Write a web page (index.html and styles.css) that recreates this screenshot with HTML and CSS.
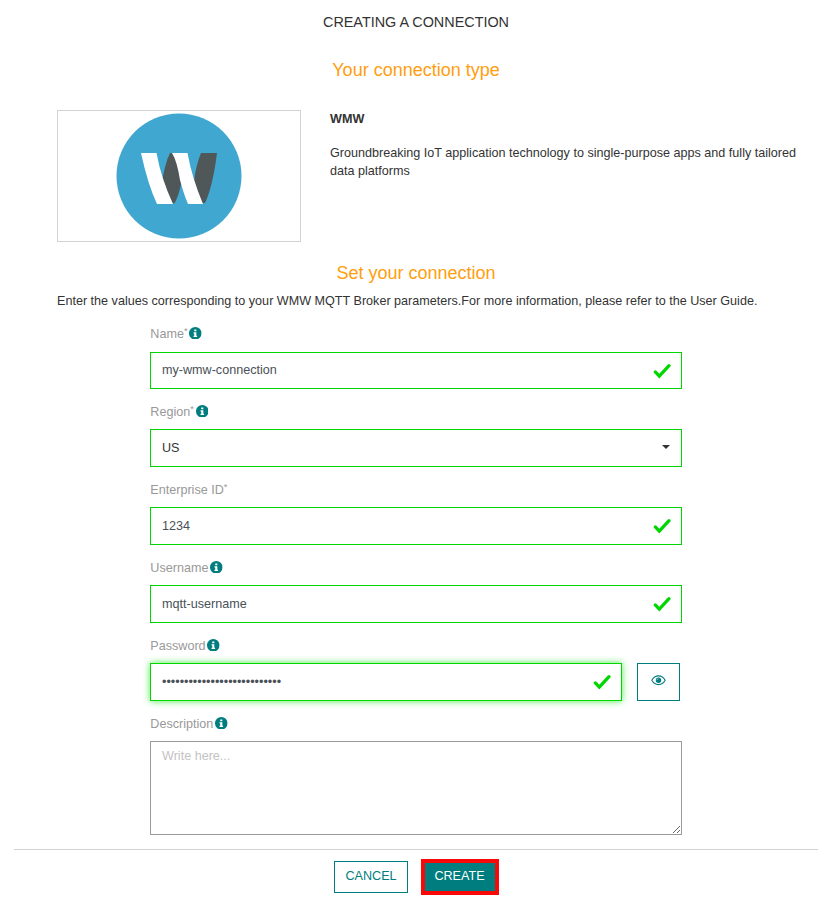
FILE: index.html
```html
<!DOCTYPE html>
<html lang="en">
<head>
<meta charset="utf-8">
<title>Creating a connection</title>
<link rel="stylesheet" href="styles.css">
</head>
<body>
<svg class="defs" width="0" height="0" aria-hidden="true">
  <symbol id="info" viewBox="0 0 12 12"><circle cx="6" cy="6" r="6"/><path fill="#fff" d="M5 2.300H7V4H5ZM4.300 4.900H7V8.300H7.700V9.500H4.300V8.300H5V6.100H4.300Z"/></symbol>
  <symbol id="check" viewBox="0 0 18 16"><path d="M2.300 8.900 6.300 13.100 16 2.700" fill="none" stroke="currentColor" stroke-width="3.200" stroke-linecap="round" stroke-linejoin="miter"/></symbol>
</svg>
<main class="dialog">
  <h1 class="title">CREATING A CONNECTION</h1>
  <h2 class="heading">Your connection type</h2>
  <section class="type">
    <div class="logo">
      <svg width="126" height="126" viewBox="0 0 126 126">
        <circle cx="63" cy="63" r="62.500" fill="#40a8d0"/>
        <path fill="#505758" d="M54 40H58L66 67Q63 82 59 89.500 57.500 91.500 55 89L46 69Q49 50 54 40ZM85 40H101Q97 72 89.500 89 87.500 92 85 88L78 68Q80 52 85 40Z"/>
        <path fill="#fff" d="M25 40H40.500Q45 65 57 91H41Q32 72 25 40ZM56 40H71.500Q76 65 87 91H72Q68 82 64 67 61 48 56 40Z"/>
      </svg>
    </div>
    <div class="about">
      <strong>WMW</strong>
      <p>Groundbreaking IoT application technology to single-purpose apps and fully tailored data platforms</p>
    </div>
  </section>
  <h2 class="heading set">Set your connection</h2>
  <p class="intro">Enter the values corresponding to your WMW MQTT Broker parameters.For more information, please refer to the User Guide.</p>
  <form class="form">
    <div class="field first">
      <label for="name">Name<sup>*</sup><svg class="info"><use href="#info"/></svg></label>
      <div class="control"><input id="name" value="my-wmw-connection"><svg class="check"><use href="#check"/></svg></div>
    </div>
    <div class="field">
      <label for="region">Region<sup>*</sup><svg class="info"><use href="#info"/></svg></label>
      <div class="control select" id="region">US<span class="caret"></span></div>
    </div>
    <div class="field">
      <label for="ent">Enterprise ID<sup>*</sup></label>
      <div class="control"><input id="ent" value="1234"><svg class="check"><use href="#check"/></svg></div>
    </div>
    <div class="field">
      <label for="user">Username<svg class="info"><use href="#info"/></svg></label>
      <div class="control"><input id="user" value="mqtt-username"><svg class="check"><use href="#check"/></svg></div>
    </div>
    <div class="field">
      <label for="pass">Password<svg class="info"><use href="#info"/></svg></label>
      <div class="row">
        <div class="control focused"><input id="pass" type="password" value="abcdefghijklmnopqrstuvwxyz0"><svg class="check"><use href="#check"/></svg></div>
        <button type="button" class="reveal" aria-label="Show password">
          <svg width="15" height="11" viewBox="0 0 15 11"><path d="M.8 5.300C4-.6 11-.6 14.200 5.300 11 11 4 11 .8 5.300Z" fill="none" stroke="currentColor" stroke-width="1.100"/><circle cx="7.500" cy="5.200" r="2.700" fill="currentColor"/><path d="M6.100 5.100A1.400 1.400 0 0 1 7.500 3.700" fill="none" stroke="#fff" stroke-width=".5"/></svg>
        </button>
      </div>
    </div>
    <div class="field">
      <label for="desc">Description<svg class="info"><use href="#info"/></svg></label>
      <textarea id="desc" placeholder="Write here..."></textarea>
    </div>
  </form>
  <footer class="actions">
    <button type="button" class="btn cancel">CANCEL</button>
    <button type="button" class="btn create">CREATE</button>
  </footer>
</main>
</body>
</html>
```
FILE: styles.css
```css
* { box-sizing: border-box; }
body { margin: 0; background: #fff; color: #333; font: 12.6px/18px "Liberation Sans", Arial, sans-serif; }
h1, h2, p { margin: 0; font-weight: 400; }
input, textarea, button { font: inherit; margin: 0; border-radius: 0; }
.defs { display: block; }
.dialog { width: 804px; margin-left: 14px; padding-top: 12px; }
.title { font-size: 14.4px; line-height: 20px; text-align: center; }
.heading { margin-top: 28px; font-size: 18px; line-height: 20px; color: #ff9e0f; text-align: center; }
.type { display: flex; gap: 29px; margin: 30px 0 0 43px; }
.logo { flex: none; display: flex; justify-content: center; width: 244px; height: 132px; padding-top: 2px; border: 1px solid #d3d3d3; }
.about { width: 480px; }
.about strong { display: block; margin-bottom: 16px; }
.set { margin-top: 21px; }
.intro { margin: 9px 0 0 43px; }
.form { width: 532px; margin: 15px 0 0 136px; }
.field { height: 78px; padding-top: 1px; }
.field.first { height: 77px; padding-top: 0; }
.field label { display: flex; height: 26px; padding-left: .3px; color: #999; }
.field.first label { height: 27px; }
.field sup { font-size: 9.450px; line-height: 12px; }
.info { width: 12.600px; height: 12.600px; margin: 1.700px 0 0 1.700px; fill: #007d7e; }
.control { position: relative; width: 100%; height: 38px; border: 1px solid #00d600; }
.first .control { height: 37px; }
.control input { display: block; width: 100%; height: 35px; padding: 0 11px; border: 0; outline: 0; background: none; color: #495057; }
.first .control input { height: 34px; }
.check { position: absolute; right: 10px; top: 10px; width: 18px; height: 16px; color: #00d600; }
.first .check { top: 9.500px; }
.select { display: flex; align-items: center; justify-content: space-between; padding: 0 11px; }
.caret { border: 4px solid transparent; border-top-color: #333; border-bottom: 0; margin-bottom: 2px; }
.row { display: flex; gap: 15px; width: 530px; }
.row .control { flex: 1; }
.focused { box-shadow: 0 0 7px rgba(0, 230, 0, .7); }
.reveal { width: 43px; height: 38px; padding: 0 0 1px; border: 1px solid #007d7e; background: #fff; color: #007d7e; }
textarea { display: block; width: 532px; height: 94px; padding: 5px 11px; border: 1px solid #999; outline: 0; }
textarea::placeholder { color: #c3c3c3; }
.actions { display: flex; justify-content: center; gap: 13px; margin-top: 57px; padding-top: 9px; border-top: 1px solid #d3d3d3; }
.btn { height: 32px; margin-top: 2px; padding: 0 0 3px; border: 1px solid #007d7e; }
.cancel { width: 74px; padding-left: 1px; background: #fff; color: #007d7e; }
.create { width: 78px; height: 36px; margin-top: 0; border: 4px solid #f90808; background: #007d7e; color: #fff; }
```
